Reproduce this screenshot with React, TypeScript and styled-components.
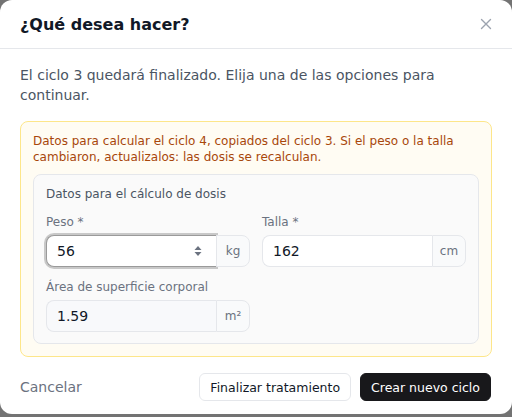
import React, { useState, ChangeEvent } from 'react';
import styled, { createGlobalStyle } from 'styled-components';

const GlobalStyle = createGlobalStyle`
  * { box-sizing: border-box; }
  body {
    margin: 0;
    background: #737373;
    font-family: 'DejaVu Sans', 'Noto Sans', sans-serif;
  }
`;

interface FieldProps {
  label: string;
  value: string;
  unit: string;
  focused?: boolean;
  readOnly?: boolean;
  spinner?: boolean;
  onChange?: (e: ChangeEvent<HTMLInputElement>) => void;
}

function UnitField({ label, value, unit, focused, readOnly, spinner, onChange }: FieldProps) {
  return (
    <FieldBlock>
      <FieldLabel>{label}</FieldLabel>
      <InputGroup>
        <InputWrap $focused={focused} $readOnly={readOnly}>
          <TextInput value={value} readOnly={readOnly} onChange={onChange} />
          {spinner && (
            <svg width='10' height='16' viewBox='0 0 10 16'>
              <path d='M5 3 L8.5 7 H1.5 Z' fill='#6b7280' />
              <path d='M5 13 L8.5 9 H1.5 Z' fill='#6b7280' />
            </svg>
          )}
        </InputWrap>
        <Addon>{unit}</Addon>
      </InputGroup>
    </FieldBlock>
  );
}

export default function App() {
  const [peso, setPeso] = useState('56');
  const [talla, setTalla] = useState('162');

  return (
    <>
      <GlobalStyle />
      <Dialog>
        <Header>
          <Title>¿Qué desea hacer?</Title>
          <CloseButton aria-label='Cerrar'>
            <svg width='14' height='14' viewBox='0 0 14 14'>
              <path d='M2.5 2.5 L11.5 11.5 M11.5 2.5 L2.5 11.5' stroke='#9ca3af' strokeWidth='1.4' strokeLinecap='round' />
            </svg>
          </CloseButton>
        </Header>
        <Body>
          <Intro>El ciclo 3 quedará finalizado. Elija una de las opciones para continuar.</Intro>
          <Notice>
            <NoticeText>
              Datos para calcular el ciclo 4, copiados del ciclo 3. Si el peso o la talla cambiaron,
              actualizalos: las dosis se recalculan.
            </NoticeText>
            <DoseCard>
              <CardTitle>Datos para el cálculo de dosis</CardTitle>
              <FieldGrid>
                <UnitField
                  label='Peso *'
                  value={peso}
                  unit='kg'
                  focused
                  spinner
                  onChange={(e) => setPeso(e.target.value)}
                />
                <UnitField
                  label='Talla *'
                  value={talla}
                  unit='cm'
                  onChange={(e) => setTalla(e.target.value)}
                />
                <UnitField label='Área de superficie corporal' value='1.59' unit='m²' readOnly />
              </FieldGrid>
            </DoseCard>
          </Notice>
        </Body>
        <Footer>
          <GhostButton>Cancelar</GhostButton>
          <Actions>
            <Button>Finalizar tratamiento</Button>
            <Button $primary>Crear nuevo ciclo</Button>
          </Actions>
        </Footer>
      </Dialog>
    </>
  );
}

const Dialog = styled.div`
  width: 512px;
  height: 414px;
  background: #ffffff;
  border-radius: 12px;
  display: flex;
  flex-direction: column;
  overflow: hidden;
`;

const Header = styled.div`
  height: 49px;
  padding: 0 20px;
  display: flex;
  align-items: center;
  justify-content: space-between;
  border-bottom: 1px solid #e5e7eb;
`;

const Title = styled.h2`
  margin: 0;
  font-size: 16px;
  font-weight: 700;
  color: #111827;
`;

const CloseButton = styled.button`
  border: none;
  background: none;
  padding: 0;
  margin-right: -1px;
  display: flex;
  cursor: pointer;
`;

const Body = styled.div`
  padding: 16px 20px 0;
  display: flex;
  flex-direction: column;
  gap: 16px;
`;

const Intro = styled.p`
  margin: 0;
  font-size: 14px;
  line-height: 20px;
  color: #4b5563;
`;

const Notice = styled.div`
  border: 1px solid #fde68a;
  background: #fffcf3;
  border-radius: 8px;
  padding: 11px 12px 12px;
  display: flex;
  flex-direction: column;
  gap: 9px;
`;

const NoticeText = styled.p`
  margin: 0;
  font-size: 12px;
  line-height: 16px;
  color: #a8470b;
`;

const DoseCard = styled.div`
  border: 1px solid #e5e7eb;
  background: #fafafa;
  border-radius: 8px;
  padding: 11px 12px 11px;
  display: flex;
  flex-direction: column;
  gap: 12px;
`;

const CardTitle = styled.div`
  font-size: 12px;
  line-height: 16px;
  color: #4b5563;
`;

const FieldGrid = styled.div`
  display: grid;
  grid-template-columns: 204px 204px;
  column-gap: 12px;
  row-gap: 12px;
`;

const FieldBlock = styled.div`
  min-width: 0;
  display: flex;
  flex-direction: column;
  gap: 5px;
`;

const FieldLabel = styled.label`
  font-size: 12px;
  line-height: 16px;
  color: #6b7280;
`;

const InputGroup = styled.div`
  display: flex;
  height: 32px;
`;

const InputWrap = styled.div<{ $focused?: boolean; $readOnly?: boolean }>`
  flex: 1;
  min-width: 0;
  display: flex;
  align-items: center;
  padding: 0 13px 0 10px;
  border: 1px solid ${({ $focused }) => ($focused ? '#9a9a9a' : '#e5e7eb')};
  border-right: none;
  border-radius: 8px 0 0 8px;
  background: ${({ $readOnly }) => ($readOnly ? '#f8f9fb' : '#ffffff')};
  box-shadow: ${({ $focused }) => ($focused ? '0 0 0 2px #c8c8c8' : 'none')};
`;

const TextInput = styled.input`
  flex: 1;
  width: 100%;
  min-width: 0;
  border: none;
  outline: none;
  background: transparent;
  padding: 0;
  font-family: inherit;
  font-size: 14px;
  color: #111827;
`;

const Addon = styled.span`
  width: 34px;
  flex: none;
  display: flex;
  align-items: center;
  justify-content: center;
  border: 1px solid #e5e7eb;
  border-radius: 0 8px 8px 0;
  background: #f9fafb;
  font-size: 12px;
  color: #6b7280;
`;

const Footer = styled.div`
  margin-top: auto;
  padding: 0 21px 13px 20px;
  display: flex;
  align-items: center;
  justify-content: space-between;
`;

const GhostButton = styled.button`
  border: none;
  background: none;
  padding: 0;
  font-family: inherit;
  font-size: 14px;
  color: #6b7280;
  cursor: pointer;
`;

const Actions = styled.div`
  display: flex;
  gap: 9px;
`;

const Button = styled.button<{ $primary?: boolean }>`
  height: 28px;
  padding: 0 10px;
  border-radius: 6px;
  border: 1px solid ${({ $primary }) => ($primary ? '#18181b' : '#e5e7eb')};
  background: ${({ $primary }) => ($primary ? '#18181b' : '#ffffff')};
  color: ${({ $primary }) => ($primary ? '#ffffff' : '#111827')};
  font-family: inherit;
  font-size: 12.5px;
  cursor: pointer;
`;
